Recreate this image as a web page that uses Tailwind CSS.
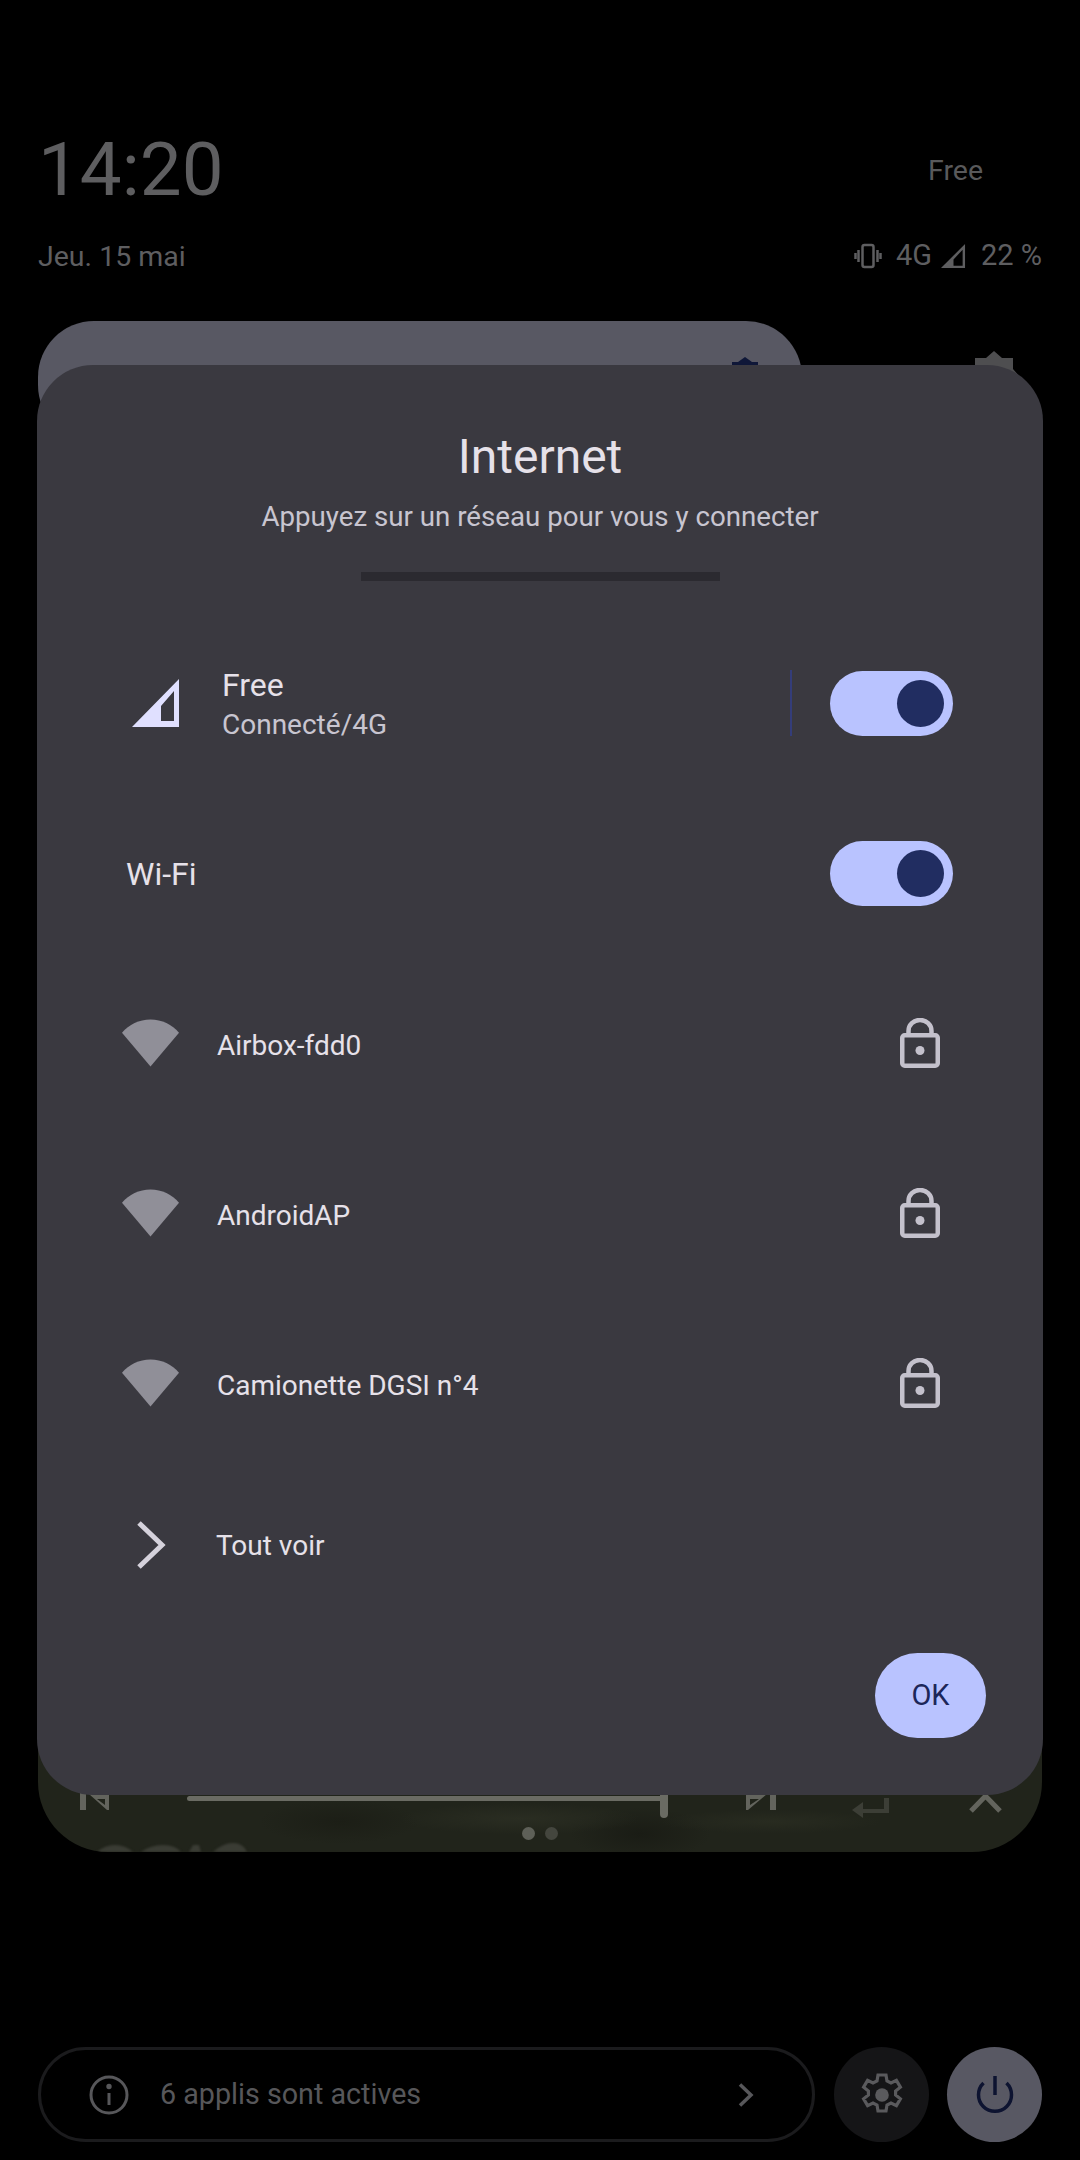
<!DOCTYPE html>
<html lang="fr">
<head>
<meta charset="utf-8">
<title>Internet</title>
<script src="https://cdn.jsdelivr.net/npm/@tailwindcss/browser@4"></script>
</head>
<body class="bg-black">
<div class="relative w-[1080px] h-[2160px] overflow-hidden bg-black font-['Roboto',sans-serif]">

  <!-- shade header -->
  <header class="px-[38px] pt-[132px] text-[#5e5e60]">
    <div class="flex items-center justify-between h-[76px]">
      <span class="text-[74.500px] leading-[76px] font-normal">14:20</span>
      <span class="text-[28.5px] mr-[59px] pt-[2px] text-[#59595b]">Free</span>
    </div>
    <div class="flex items-center justify-between h-[40px] mt-[28px] text-[29px]">
      <span class="pt-[2px] text-[28.500px]">Jeu. 15 mai</span>
      <div class="flex items-center">
        <svg width="28" height="28" viewBox="0 0 28 28" fill="none" stroke="currentColor" stroke-width="2.5" class="mr-[14px]">
          <rect x="8.5" y="3" width="11" height="22" rx="2"/>
          <path d="M4.5 8v12M1.5 11v6M23.5 8v12M26.5 11v6"/>
        </svg>
        <span>4G</span>
        <svg width="25" height="25" viewBox="0 0 26 26" class="ml-[9px] mr-[15px]">
          <path fill-rule="evenodd" fill="currentColor" d="M25 0V25H0ZM22.5 6 13 16V22.5H22.5Z"/>
        </svg>
        <span>22 %</span>
      </div>
    </div>
  </header>

  <!-- tiles behind the dialog -->
  <div class="flex mt-[45px] px-[38px]">
    <div class="w-[764px] h-[120px] rounded-[56px] bg-[#585863]"></div>
  </div>
  <svg class="absolute left-[965px] top-[350px]" width="60" height="40" viewBox="0 0 60 40" fill="#4e4e50"><path d="M29 1 37 8H48V19L56 28 48 38H10V8H21Z"/></svg>
  <svg class="absolute left-[732px] top-[357px]" width="26" height="10" viewBox="0 0 26 10" fill="#0f1738"><path d="M13 0 20 5H26V10H0V5H6Z"/></svg>

  <!-- media card -->
  <div class="absolute left-[38px] top-[1700px] w-[1004px] h-[152px] rounded-b-[70px] overflow-hidden bg-[#21241b]">
    <div class="absolute inset-0 bg-[radial-gradient(ellipse_120px_16px_at_48%_78%,#2a2d22_0%,transparent_100%),radial-gradient(ellipse_110px_12px_at_73%_80%,#282b20_0%,transparent_100%),radial-gradient(ellipse_70px_26px_at_60%_88%,#1a1c15_0%,transparent_100%),radial-gradient(ellipse_80px_22px_at_30%_80%,#1c1e16_0%,transparent_100%)]"></div>
    <!-- tops of the big blurred title on the artwork -->
    <svg class="absolute left-[59px] top-[142px] blur-[1px]" width="150" height="10" viewBox="0 0 150 10" fill="#3a3c34"><path d="M0 10Q8 3 18 3T36 10ZM44 10Q54 3 66 3T84 10ZM92 10 96 3H102L104 10ZM116 10Q126 1 136 1T150 10Z"/></svg>
    <svg class="absolute left-[42px] top-[90px]" width="30" height="21" viewBox="0 0 30 21" fill="#63645d"><path fill-rule="evenodd" d="M0 0H6V20H0ZM9 4H29V20H27ZM25 9 17 9 25 15Z"/></svg>
    <div class="absolute left-[149px] top-[96px] w-[477px] h-[5px] rounded-full bg-[#6a6b63]"></div>
    <div class="absolute left-[622px] top-[90px] w-[8px] h-[28px] rounded-full bg-[#6a6b63]"></div>
    <svg class="absolute left-[708px] top-[90px]" width="30" height="21" viewBox="0 0 30 21" fill="#63645d"><path fill-rule="evenodd" d="M30 0H24V20H30ZM21 4H0V20H2ZM4 9 13 9 4 15Z"/></svg>
    <svg class="absolute left-[814px] top-[98px]" width="37" height="20" viewBox="0 0 37 20" fill="#3c3e36"><path d="M32 0H37V15H11V20L0 12 11 4V11H32Z"/></svg>
    <svg class="absolute left-[931px] top-[92px]" width="33" height="21" viewBox="0 0 33 21" fill="none" stroke="#63645d" stroke-width="5"><path d="M2 19 16.5 4 31 19"/></svg>
    <div class="absolute left-[484px] top-[127px] flex gap-[10px]">
      <span class="w-[13px] h-[13px] rounded-full bg-[#5e6058]"></span>
      <span class="w-[13px] h-[13px] rounded-full bg-[#44463e]"></span>
    </div>
  </div>

  <!-- bottom bar -->
  <div class="absolute left-[38px] top-[2047px] w-[1004px] h-[95px] flex items-center">
    <div class="flex items-center shrink-0 w-[777px] h-full rounded-full border-[3px] border-[#1b1b1d] pl-[48px] pr-[58px] text-[#57575a]">
      <svg width="40" height="40" viewBox="0 0 40 40" fill="none" stroke="currentColor" stroke-width="3">
        <circle cx="20" cy="20" r="18"/><path d="M20 18v12"/><circle cx="20" cy="11.5" r="1.200" fill="currentColor"/>
      </svg>
      <span class="ml-[31px] text-[28.700px] flex-1">6 applis sont actives</span>
      <svg width="16" height="24" viewBox="0 0 16 24" fill="none" stroke="currentColor" stroke-width="3.500"><path d="M2 1.500 13 12 2 22.500"/></svg>
    </div>
    <div class="flex items-center justify-center shrink-0 ml-[19px] w-[95px] h-[95px] rounded-full bg-[#151517] text-[#5a5a5d]">
      <svg width="48" height="48" viewBox="0 0 24 24" fill="none" stroke="currentColor" stroke-width="1.600">
        <path d="M10 2h4l.5 3 2 1 2.700-1.300 2 3.400-2.400 1.900v2l2.400 1.900-2 3.400-2.700-1.300-2 1-.5 3h-4l-.5-3-2-1-2.700 1.300-2-3.400 2.400-1.900v-2L2.800 8.100l2-3.400L7.500 6l2-1z"/>
        <circle cx="12" cy="12" r="3.400" fill="currentColor" stroke="none"/>
      </svg>
    </div>
    <div class="flex items-center justify-center shrink-0 ml-[18px] w-[95px] h-[95px] rounded-full bg-[#585863] text-[#0d1330]">
      <svg width="40" height="40" viewBox="0 0 40 40" fill="none" stroke="currentColor" stroke-width="3.500">
        <path d="M20 1v19"/><path d="M8.500 8a16.500 16.500 0 1 0 23 0"/>
      </svg>
    </div>
  </div>

  <!-- internet dialog -->
  <section class="absolute left-[37px] top-[365px] w-[1006px] h-[1430px] rounded-[56px] bg-[#3a3940] flex flex-col">
    <h1 class="mt-[64px] text-center text-[48px] leading-[56px] text-[#e6e1e9]">Internet</h1>
    <p class="mt-[12px] text-center text-[27.700px] leading-[40px] text-[#c8c5d0]">Appuyez sur un réseau pour vous y connecter</p>
    <div class="mt-[35px] mx-auto w-[359px] h-[9px] bg-[#2b2a30]"></div>

    <div class="mt-[89px] flex items-center h-[66px] pl-[95px] pr-[90px]">
      <svg width="48" height="48" viewBox="0 0 48 48" class="shrink-0">
        <path fill-rule="evenodd" fill="#e0e0ff" d="M47 0V48H0ZM42 12 29 27V42H42Z"/>
      </svg>
      <div class="ml-[42px] pt-[2px] flex-1">
        <div class="text-[32px] leading-[42px] text-[#e6e1e9]">Free</div>
        <div class="text-[28px] leading-[38px] text-[#c8c5d0]">Connecté/4G</div>
      </div>
      <div class="w-[2px] h-[66px] bg-[#343d7a] mr-[38px]"></div>
      <div class="flex items-center justify-end w-[123px] h-[65px] rounded-full bg-[#b9c3ff] pr-[9px]">
        <span class="w-[47px] h-[47px] rounded-full bg-[#212d61]"></span>
      </div>
    </div>

    <div class="mt-[104px] flex items-center justify-between h-[66px] pl-[89px] pr-[90px]">
      <span class="pt-[2px] text-[32px] text-[#e6e1e9]">Wi-Fi</span>
      <div class="flex items-center justify-end w-[123px] h-[65px] rounded-full bg-[#b9c3ff] pr-[9px]">
        <span class="w-[47px] h-[47px] rounded-full bg-[#212d61]"></span>
      </div>
    </div>

    <div class="mt-[104px] flex items-center h-[66px] pl-[85px] pr-[103px]">
      <svg width="57" height="48" viewBox="0 0 58 48" class="shrink-0"><path fill="#908f98" d="M0 13.500C7 5 17.500 0 29 0s22 5 29 13.500L29 48Z"/></svg>
      <span class="ml-[38px] pt-[5px] flex-1 text-[28px] text-[#e6e1e9]">Airbox-fdd0</span>
      <svg width="40" height="50" viewBox="0 0 40 50" fill="none" stroke="#c4c1cc" stroke-width="4.500">
        <rect x="2.250" y="17.250" width="35.500" height="30.500" rx="2.500"/>
        <path d="M8.500 17V13a11.500 11 0 0 1 23 0v4"/>
        <circle cx="20" cy="32.500" r="4.500" fill="#c4c1cc" stroke="none"/>
      </svg>
    </div>
    <div class="mt-[104px] flex items-center h-[66px] pl-[85px] pr-[103px]">
      <svg width="57" height="48" viewBox="0 0 58 48" class="shrink-0"><path fill="#908f98" d="M0 13.500C7 5 17.500 0 29 0s22 5 29 13.500L29 48Z"/></svg>
      <span class="ml-[38px] pt-[5px] flex-1 text-[28px] text-[#e6e1e9]">AndroidAP</span>
      <svg width="40" height="50" viewBox="0 0 40 50" fill="none" stroke="#c4c1cc" stroke-width="4.500">
        <rect x="2.250" y="17.250" width="35.500" height="30.500" rx="2.500"/>
        <path d="M8.500 17V13a11.500 11 0 0 1 23 0v4"/>
        <circle cx="20" cy="32.500" r="4.500" fill="#c4c1cc" stroke="none"/>
      </svg>
    </div>
    <div class="mt-[104px] flex items-center h-[66px] pl-[85px] pr-[103px]">
      <svg width="57" height="48" viewBox="0 0 58 48" class="shrink-0"><path fill="#908f98" d="M0 13.500C7 5 17.500 0 29 0s22 5 29 13.500L29 48Z"/></svg>
      <span class="ml-[38px] pt-[5px] flex-1 text-[28px] text-[#e6e1e9]">Camionette DGSI n°4</span>
      <svg width="40" height="50" viewBox="0 0 40 50" fill="none" stroke="#c4c1cc" stroke-width="4.500">
        <rect x="2.250" y="17.250" width="35.500" height="30.500" rx="2.500"/>
        <path d="M8.500 17V13a11.500 11 0 0 1 23 0v4"/>
        <circle cx="20" cy="32.500" r="4.500" fill="#c4c1cc" stroke="none"/>
      </svg>
    </div>

    <div class="mt-[105px] flex items-center h-[48px] pl-[99px]">
      <svg width="30" height="48" viewBox="0 0 30 48" fill="none" stroke="#d5d2dc" stroke-width="5"><path d="M3 2 26 24 3 46"/></svg>
      <span class="ml-[50px] pt-[2px] text-[28px] text-[#e6e1e9]">Tout voir</span>
    </div>

    <div class="mt-auto mb-[57px] mr-[57px] self-end flex items-center justify-center w-[111px] h-[85px] rounded-full bg-[#b9c3ff] text-[29px] font-normal text-[#1c2659]">OK</div>
  </section>
</div>
</body>
</html>
